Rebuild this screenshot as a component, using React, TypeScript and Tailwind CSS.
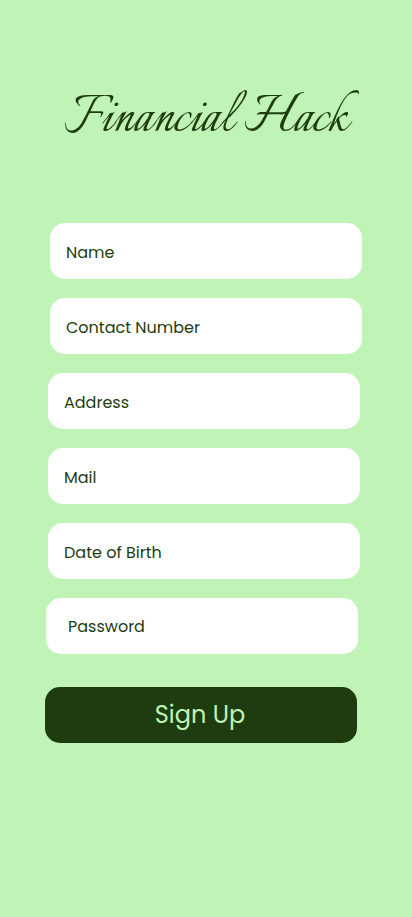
type FieldProps = {
  id: string;
  label: string;
  type?: string;
  inset?: string;
};

function Field({ id, label, type = "text", inset = "px-4 pt-0.5" }: FieldProps) {
  return (
    <input
      id={id}
      name={id}
      type={type}
      aria-label={label}
      placeholder={label}
      className={`block h-14 w-full rounded-[15px] bg-white text-base text-[#1e3c0f] placeholder:text-[#1e3c0f] placeholder:opacity-100 ${inset}`}
    />
  );
}

export default function App() {
  return (
    <main className="min-h-screen bg-[#bff4b6] pt-20 pb-12 font-['Poppins','Inter',sans-serif] text-[#1e3c0f]">
      <h1 className="text-center font-['Italianno','Tangerine',cursive] text-[64px] leading-[78px] whitespace-nowrap">
        Financial Hack
      </h1>
      <form className="mt-[65px]" onSubmit={(e) => e.preventDefault()}>
        <div className="flex flex-col gap-[19px]">
          <div className="flex flex-col gap-[19px] px-[50px]">
            <Field id="name" label="Name" />
            <Field id="contact" label="Contact Number" type="tel" />
          </div>
          <div className="flex flex-col gap-[19px] pr-[52px] pl-12">
            <Field id="address" label="Address" />
            <Field id="mail" label="Mail" type="email" />
            <Field id="birth" label="Date of Birth" />
          </div>
          <div className="pr-[54px] pl-[46px]">
            <Field id="password" label="Password" type="password" inset="px-[22px]" />
          </div>
        </div>
        <div className="mt-[33px] pr-[55px] pl-[45px]">
          <button
            type="submit"
            className="h-14 w-full rounded-[15px] bg-[#1e3c0f] pr-0.5 text-2xl text-[#bff4b6]"
          >
            Sign Up
          </button>
        </div>
      </form>
    </main>
  );
}
